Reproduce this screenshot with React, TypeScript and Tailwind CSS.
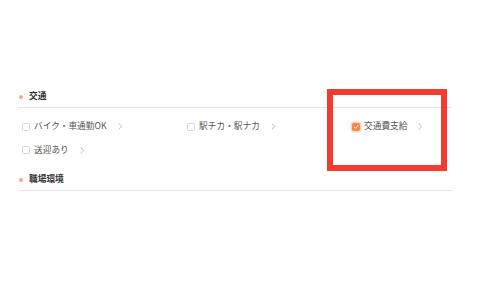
import React from "react";

type Item = { label: string; checked?: boolean };

const transportItems: Item[] = [
  { label: "バイク・車通勤OK" },
  { label: "駅チカ・駅ナカ" },
  { label: "交通費支給", checked: true },
  { label: "送迎あり" },
];

const Chevron: React.FC = () => (
  <svg width="5" height="7" viewBox="0 0 5 7" fill="none" className="shrink-0">
    <path d="M1 0.8 L3.8 3.5 L1 6.2" stroke="#b5b5b5" strokeWidth="0.9" strokeLinecap="round" strokeLinejoin="round" />
  </svg>
);

const Checkbox: React.FC<{ checked?: boolean }> = ({ checked }) =>
  checked ? (
    <span className="flex h-[8px] w-[8px] shrink-0 items-center justify-center rounded-[2px] bg-[#f28a4b] ring-[1.5px] ring-[#fbd5bf]">
      <svg width="6" height="6" viewBox="0 0 6 6" fill="none">
        <path d="M1.2 3.1 L2.5 4.3 L4.8 1.8" stroke="#ffffff" strokeWidth="0.9" strokeLinecap="round" strokeLinejoin="round" />
      </svg>
    </span>
  ) : (
    <span className="h-[8px] w-[8px] shrink-0 rounded-[1.5px] border border-[#d4d4d4] bg-white" />
  );

const SectionHeader: React.FC<{ title: string }> = ({ title }) => (
  <div className="flex h-[22px] items-center border-b border-[#e6e6e6]">
    <span className="ml-[0.5px] h-[4px] w-[4px] rounded-full bg-[#f4a87c]" />
    <span className="ml-[6.5px] text-[8.7px] font-bold leading-none text-[#333333]">{title}</span>
  </div>
);

const CheckRow: React.FC<{ item: Item }> = ({ item }) => (
  <div className="flex h-[23.5px] items-center">
    <Checkbox checked={item.checked} />
    <span className="ml-[4px] text-[8.7px] leading-none text-[#555555]">{item.label}</span>
    <span className="ml-[11px]">
      <Chevron />
    </span>
  </div>
);

export default function App() {
  return (
    <div
      className="relative h-[300px] w-[500px] overflow-hidden bg-white"
      style={{ fontFamily: '"Noto Sans CJK JP", "Noto Sans", sans-serif' }}
    >
      <div className="ml-[18px] w-[434px] pt-[86px]">
        <SectionHeader title="交通" />
        <div className="grid grid-cols-[165px_165px_auto] pl-[4px] pt-[7px]">
          {transportItems.map((item) => (
            <CheckRow key={item.label} item={item} />
          ))}
        </div>
        <div className="mt-[7px]">
          <SectionHeader title="職場環境" />
        </div>
      </div>

      {/* highlight box */}
      <div className="absolute left-[327px] top-[89px] h-[82px] w-[120px] border-[6px] border-[#f23c2f]" />
    </div>
  );
}
